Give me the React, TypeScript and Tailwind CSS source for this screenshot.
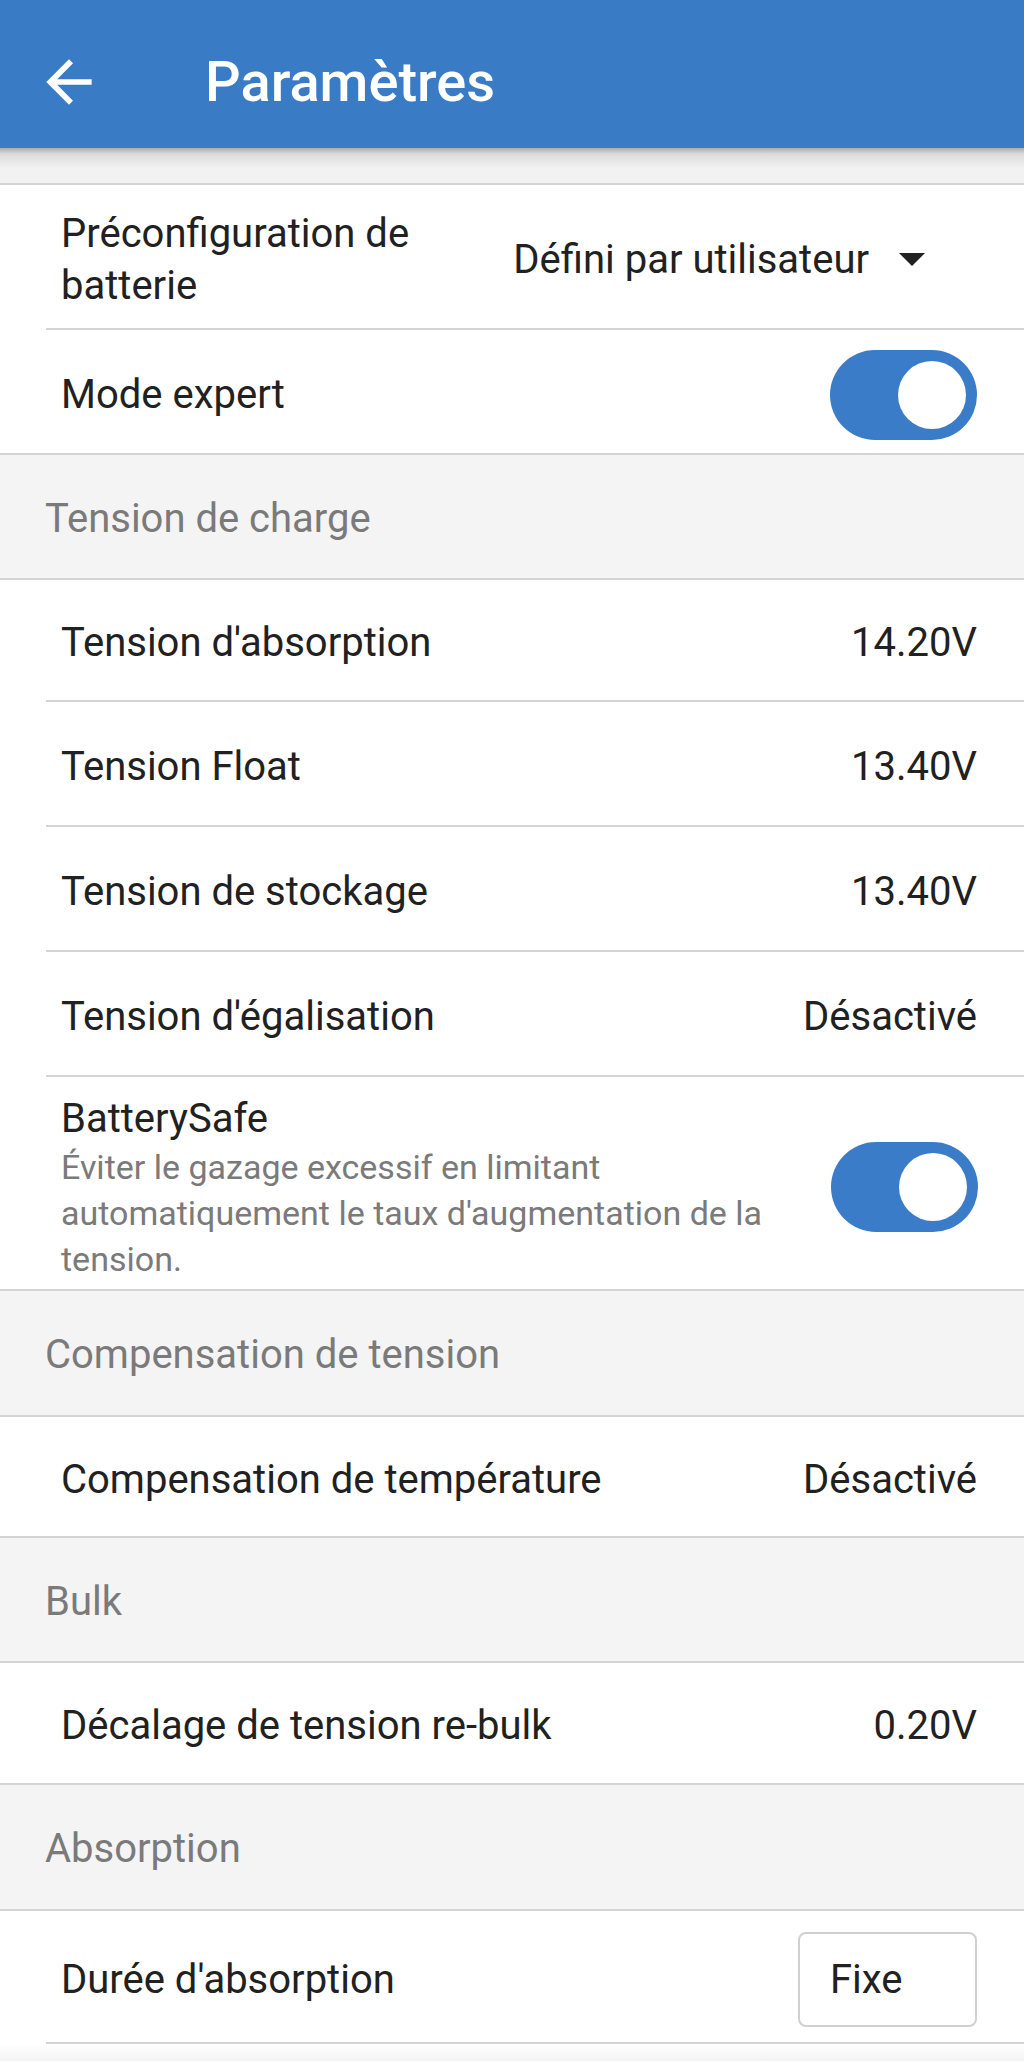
import React from 'react';

type RowProps = {
  label: React.ReactNode;
  right?: React.ReactNode;
  height: string;
  full?: boolean;
};

function Toggle() {
  return (
    <div className="w-[147px] h-[90px] shrink-0 rounded-full bg-[#3a7cc7] flex items-center justify-end pr-[11px]">
      <div className="w-[68px] h-[68px] rounded-full bg-white" />
    </div>
  );
}

function Row({ label, right, height, full }: RowProps) {
  return (
    <div className={full ? `bg-white border-b-2 border-[#d4d4d4] pl-[61px] ${height}` : `bg-white pl-[46px] ${height}`}>
      <div
        className={
          full
            ? 'h-full flex items-center justify-between pt-[6px] pr-[47px] gap-[40px]'
            : 'h-full flex items-center justify-between pt-[6px] pl-[15px] pr-[47px] gap-[40px] border-b-2 border-[#d4d4d4]'
        }
      >
        <div className="flex-1 min-w-0 text-[40px] leading-[52px] text-[#212121]">{label}</div>
        {right}
      </div>
    </div>
  );
}

function Value({ children }: { children: React.ReactNode }) {
  return <span className="shrink-0 text-[40px] leading-[52px] text-[#212121]">{children}</span>;
}

function Section({ title, height }: { title: string; height: string }) {
  return (
    <div className={`bg-[#f4f4f4] border-b-2 border-[#d4d4d4] flex items-center pt-[4px] pl-[45px] ${height}`}>
      <span className="text-[40px] leading-[52px] text-[#7a7a7a]">{title}</span>
    </div>
  );
}

export default function App() {
  return (
    <div className="w-[1024px] h-[2063px] overflow-hidden bg-white font-['Roboto',sans-serif]">
      <header className="h-[148px] bg-[#3a7bc6] flex items-center pt-[16px] pl-[35px]">
        <svg viewBox="0 0 24 24" className="w-[68px] h-[68px] fill-white shrink-0">
          <path d="M20 11H7.83l5.59-5.59L12 4l-8 8 8 8 1.41-1.41L7.83 13H20v-2z" />
        </svg>
        <h1 className="ml-[102px] text-[56px] leading-[64px] font-medium text-white">Paramètres</h1>
      </header>

      <div className="h-[37px] bg-[#f2f2f2] border-b-2 border-[#d4d4d4] bg-[linear-gradient(to_bottom,#a9a9a9_0px,#dcdcdc_6px,#f2f2f2_20px)]" />

      <Row
        height="h-[145px]"
        label={<span className="block">Préconfiguration de batterie</span>}
        right={
          <div className="shrink-0 flex items-center">
            <span className="text-[40px] leading-[52px] text-[#212121]">Défini par utilisateur</span>
            <svg viewBox="0 0 26 13" className="w-[26px] h-[13px] ml-[30px] mr-[52px] fill-[#212121]">
              <path d="M0 0h26L13 13z" />
            </svg>
          </div>
        }
      />
      <Row height="h-[125px]" full label="Mode expert" right={<Toggle />} />

      <Section title="Tension de charge" height="h-[125px]" />
      <Row height="h-[122px]" label="Tension d'absorption" right={<Value>14.20V</Value>} />
      <Row height="h-[125px]" label="Tension Float" right={<Value>13.40V</Value>} />
      <Row height="h-[125px]" label="Tension de stockage" right={<Value>13.40V</Value>} />
      <Row height="h-[125px]" label="Tension d'égalisation" right={<Value>Désactivé</Value>} />

      <div className="h-[214px] bg-white border-b-2 border-[#d4d4d4] pl-[61px] pr-[46px] flex items-start">
        <div className="flex-1 min-w-0 pt-[17px] pr-[30px]">
          <div className="text-[40px] leading-[50px] text-[#212121]">BatterySafe</div>
          <div className="text-[34px] leading-[46px] text-[#7a7a7a]">
            Éviter le gazage excessif en limitant automatiquement le taux d'augmentation de la tension.
          </div>
        </div>
        <div className="self-center mt-[8px]">
          <Toggle />
        </div>
      </div>

      <Section title="Compensation de tension" height="h-[126px]" />
      <Row height="h-[121px]" full label="Compensation de température" right={<Value>Désactivé</Value>} />

      <Section title="Bulk" height="h-[125px]" />
      <Row height="h-[122px]" full label="Décalage de tension re-bulk" right={<Value>0.20V</Value>} />

      <Section title="Absorption" height="h-[126px]" />
      <Row
        height="h-[133px]"
        label="Durée d'absorption"
        right={
          <div className="shrink-0 w-[179px] h-[95px] border-2 border-[#d0d0d0] rounded-[8px] flex items-center pl-[30px] text-[40px] text-[#212121]">
            Fixe
          </div>
        }
      />
      <div className="h-[17px] bg-[linear-gradient(to_bottom,#ffffff,#f3f3f3)]" />
    </div>
  );
}
